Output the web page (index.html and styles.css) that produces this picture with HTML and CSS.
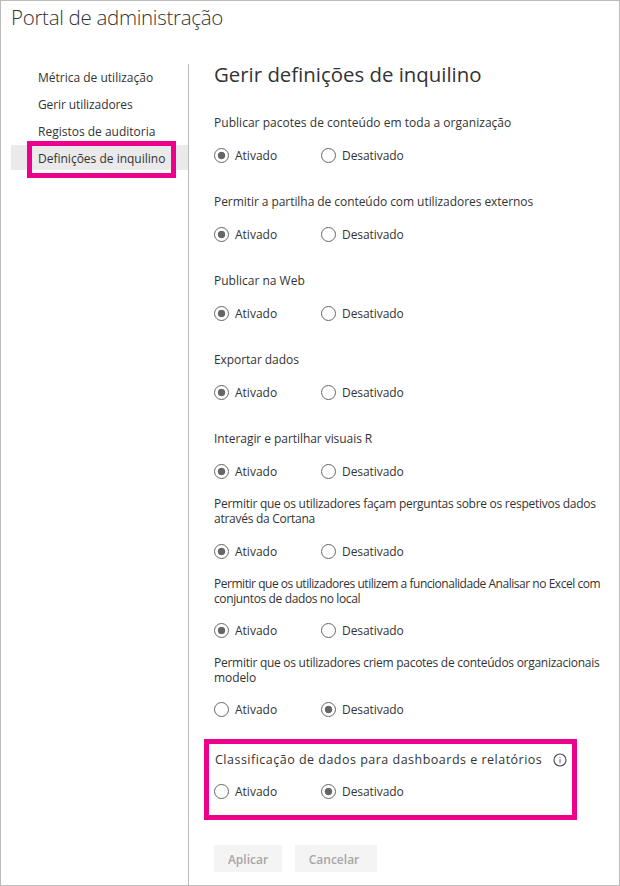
FILE: index.html
```html
<!DOCTYPE html>
<html lang="pt">
<head>
<meta charset="utf-8">
<title>Portal de administração</title>
<link rel="stylesheet" href="styles.css">
</head>
<body>
<div class="portal">
  <header class="portal-title">Portal de administração</header>
  <div class="columns">
    <nav class="sidebar">
      <a class="nav-item">Métrica de utilização</a>
      <a class="nav-item nav-users">Gerir utilizadores</a>
      <a class="nav-item">Registos de auditoria</a>
      <a class="nav-item selected">Definições de inquilino<span class="nav-highlight"></span></a>
    </nav>
    <main class="content">
      <h1>Gerir definições de inquilino</h1>
      <section class="setting first">
        <p class="label wide">Publicar pacotes de conteúdo em toda a organização</p>
        <div class="options"><span class="option"><i class="radio on"></i>Ativado</span><span class="option off-option"><i class="radio"></i>Desativado</span></div>
      </section>
      <section class="setting">
        <p class="label slim">Permitir a partilha de conteúdo com utilizadores externos</p>
        <div class="options"><span class="option"><i class="radio on"></i>Ativado</span><span class="option off-option"><i class="radio"></i>Desativado</span></div>
      </section>
      <section class="setting">
        <p class="label">Publicar na Web</p>
        <div class="options"><span class="option"><i class="radio on"></i>Ativado</span><span class="option off-option"><i class="radio"></i>Desativado</span></div>
      </section>
      <section class="setting">
        <p class="label slim">Exportar dados</p>
        <div class="options"><span class="option"><i class="radio on"></i>Ativado</span><span class="option off-option"><i class="radio"></i>Desativado</span></div>
      </section>
      <section class="setting">
        <p class="label slim">Interagir e partilhar visuais R</p>
        <div class="options"><span class="option"><i class="radio on"></i>Ativado</span><span class="option off-option"><i class="radio"></i>Desativado</span></div>
      </section>
      <section class="setting cortana">
        <p class="label tight">Permitir que os utilizadores façam perguntas sobre os respetivos dados<br>através da Cortana</p>
        <div class="options"><span class="option"><i class="radio on"></i>Ativado</span><span class="option off-option"><i class="radio"></i>Desativado</span></div>
      </section>
      <section class="setting">
        <p class="label tighter lower">Permitir que os utilizadores utilizem a funcionalidade Analisar no Excel com<br><span class="second-line">conjuntos de dados no local</span></p>
        <div class="options"><span class="option"><i class="radio on"></i>Ativado</span><span class="option off-option"><i class="radio"></i>Desativado</span></div>
      </section>
      <section class="setting">
        <p class="label tight lower">Permitir que os utilizadores criem pacotes de conteúdos organizacionais<br><span class="last-word">modelo</span></p>
        <div class="options"><span class="option"><i class="radio"></i>Ativado</span><span class="option off-option"><i class="radio on"></i>Desativado</span></div>
      </section>
      <section class="classification">
        <p class="label">Classificação de dados para dashboards e relatórios
          <svg class="info" viewBox="0 0 14 14" width="14" height="14"><circle cx="7" cy="7" r="6" fill="none" stroke="#4a4a55" stroke-width="1.1"/><path d="M7 6v4.2M7 3.8v1.1" stroke="#7a4cae" fill="none"/></svg></p>
        <div class="options"><span class="option"><i class="radio"></i>Ativado</span><span class="option off-option"><i class="radio on"></i>Desativado</span></div>
      </section>
      <div class="actions"><button class="apply" disabled>Aplicar</button><button class="cancel" disabled>Cancelar</button></div>
    </main>
  </div>
</div>
</body>
</html>
```

FILE: styles.css
```css
* { box-sizing: border-box; }
body {
  margin: 0;
  background: #fff;
  color: #333;
  font: 12px/15px "Open Sans", "Noto Sans", sans-serif;
}
.portal {
  width: 620px;
  height: 886px;
  border: 1px solid #bbb;
  overflow: hidden;
}
.portal-title {
  height: 63px;
  padding: 1px 0 0 10px;
  font-size: 20.5px;
  font-weight: 300;
  line-height: 30px;
  letter-spacing: -.3px;
  color: #333;
}
.columns { display: flex; height: 822px; }
.sidebar {
  width: 188px;
  padding: 0 0 0 10px;
  border-right: 1px solid #bbb;
}
.nav-item {
  display: flex;
  align-items: center;
  height: 25px;
  margin-bottom: 2px;
  padding: 2px 0 0 27px;
}
.nav-users { letter-spacing: -.1px; }
.selected { position: relative; background: #eaeaea; }
.nav-highlight {
  position: absolute;
  left: 16px;
  top: -4px;
  width: 149px;
  height: 37px;
  border: 5px solid #ec008c;
}
.content { flex: 1; padding-left: 25px; }
h1 {
  margin: 0;
  height: 22px;
  font-size: 20.4px;
  font-weight: 400;
  line-height: 20px;
}
.setting {
  display: flex;
  flex-direction: column;
  justify-content: flex-end;
  height: 79px;
}
.first { height: 77px; }
.cortana { height: 80px; }
.label { margin: 0 0 18px; white-space: nowrap; }
.lower { margin-bottom: 17px; }
.wide { letter-spacing: .03px; }
.slim { letter-spacing: -.06px; }
.tight { letter-spacing: -.27px; }
.tighter { letter-spacing: -.467px; }
.second-line { letter-spacing: -.38px; }
.last-word { letter-spacing: -.08px; }
.options { display: flex; height: 15px; align-items: center; }
.option { display: flex; align-items: center; gap: 6px; width: 107px; }
.off-option { letter-spacing: -.07px; }
.radio {
  display: block;
  width: 15px;
  height: 15px;
  border: 1px solid #666;
  border-radius: 50%;
}
.on { background: radial-gradient(circle, #666 3.4px, transparent 4.1px); }
.classification {
  width: 373px;
  height: 81px;
  margin: 22px 0 0 -10px;
  padding: 8px 2px 0 5px;
  border: 5px solid #ec008c;
}
.classification .label {
  display: flex;
  align-items: center;
  height: 15px;
  margin: 0 0 17px 1px;
  font-size: 12.5px;
  letter-spacing: .49px;
}
.info { flex: none; margin-left: 11px; }
.actions { display: flex; gap: 13px; margin-top: 25px; }
button {
  height: 27px;
  padding: 1px 0 0;
  border: 0;
  background: #f4f4f4;
  color: #a6a6a6;
  font: 600 12px "Open Sans", "Noto Sans", sans-serif;
}
.apply { width: 68px; }
.cancel { width: 82px; padding-right: 4px; }
```
